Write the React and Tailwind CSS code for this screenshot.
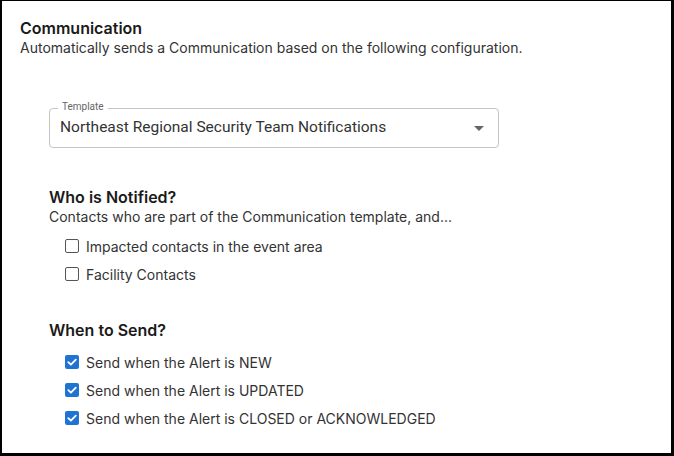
import React from "react";

function Box({ checked, label }) {
  return (
    <label className="flex items-center gap-[7px] h-[28px]">
      {checked ? (
        <span className="w-[14px] h-[14px] rounded-[2px] bg-[#1f73d2] flex items-center justify-center">
          <svg width="12" height="12" viewBox="0 0 12 12">
            <path d="M2.3 6.2 L4.9 8.7 L9.8 3.6" stroke="white" strokeWidth="1.8" fill="none" strokeLinecap="round" strokeLinejoin="round" />
          </svg>
        </span>
      ) : (
        <span className="w-[14px] h-[14px] rounded-[2px] border-[1.5px] border-[#555] bg-white" />
      )}
      <span className="text-[14px] text-[#333]">{label}</span>
    </label>
  );
}

export default function App() {
  return (
    <div className="w-[674px] h-[456px] bg-white border-t-[1px] border-l-[2px] border-r-[3px] border-b-[3px] border-black overflow-hidden" style={{ fontFamily: "Inter, 'Noto Sans', sans-serif" }}>
      <div className="pl-[18px] pt-[17px]">
        <div className="text-[16px] font-semibold text-[#1a1a1a] leading-[20px]">Communication</div>
        <div className="text-[14px] text-[#333] leading-[18px] mt-[1px]">Automatically sends a Communication based on the following configuration.</div>
      </div>
      <div className="pl-[47px] pt-[51px]">
        <div className="relative w-[450px] h-[40px] border border-[#c4c4c4] rounded-[4px] flex items-center pl-[10px] pr-[14px]">
          <span className="absolute -top-[8px] left-[8px] bg-white px-[4px] text-[10px] leading-[12px] text-[#666]" style={{ fontFamily: "Roboto, sans-serif" }}>Template</span>
          <span className="flex-1 text-[15.5px] text-[#333]" style={{ fontFamily: "Roboto, sans-serif" }}>Northeast Regional Security Team Notifications</span>
          <svg width="10" height="5" viewBox="0 0 10 5"><path d="M0 0 L10 0 L5 5 Z" fill="#666" /></svg>
        </div>
        <div className="mt-[39px] text-[16px] font-semibold text-[#1a1a1a] leading-[20px]">Who is Notified?</div>
        <div className="text-[14px] text-[#333] leading-[20px]">Contacts who are part of the Communication template, and...</div>
        <div className="pl-[16px] mt-[5px] flex flex-col">
          <Box label="Impacted contacts in the event area" />
          <Box label="Facility Contacts" />
        </div>
        <div className="mt-[32px] text-[16px] font-semibold text-[#1a1a1a] leading-[20px]">When to Send?</div>
        <div className="pl-[16px] mt-[8px] flex flex-col">
          <Box checked label="Send when the Alert is NEW" />
          <Box checked label="Send when the Alert is UPDATED" />
          <Box checked label="Send when the Alert is CLOSED or ACKNOWLEDGED" />
        </div>
      </div>
    </div>
  );
}
